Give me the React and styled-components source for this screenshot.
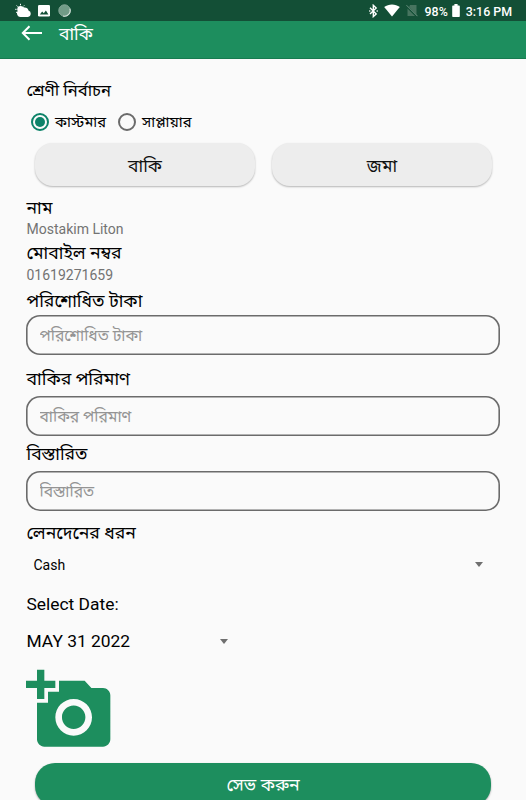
import { useState } from 'react';
import styled, { createGlobalStyle } from 'styled-components';

export default function App() {

    const [type, setType] = useState("customer");

    return (
        <>
            <GlobalStyle />
            <Screen>
                <StatusBar />
                <Header>
                    <svg width="22" height="16" viewBox="0 0 22 16" fill="none" stroke="#fff" strokeWidth="2">
                        <path d="M21 8H2M8.5 1.2L1.8 8l6.7 6.8" />
                    </svg>
                    <h1>বাকি</h1>
                </Header>
                <Content>
                    <Label $height={26} $size={16.6}>শ্রেণী নির্বাচন</Label>
                    <Radios>
                        <RadioOption onClick={() => setType("customer")}>
                            <Circle $checked={type === "customer"} />
                            <span>কাস্টমার</span>
                        </RadioOption>
                        <RadioOption onClick={() => setType("supplier")}>
                            <Circle $checked={type === "supplier"} />
                            <span>সাপ্লায়ার</span>
                        </RadioOption>
                    </Radios>
                    <Buttons>
                        <GrayButton>বাকি</GrayButton>
                        <GrayButton>জমা</GrayButton>
                    </Buttons>
                    <Label $height={22} $top={11}>নাম</Label>
                    <Value>Mostakim Liton</Value>
                    <Label $height={24} $top={2} $size={17.6}>মোবাইল নম্বর</Label>
                    <Value>01619271659</Value>
                    <Label $height={26} $top={3} $size={17.7}>পরিশোধিত টাকা</Label>
                    <Input $top={1} placeholder="পরিশোধিত টাকা" />
                    <Label $height={26} $top={11} $size={17.7}>বাকির পরিমাণ</Label>
                    <Input $top={4} placeholder="বাকির পরিমাণ" />
                    <Label $height={26} $top={5}>বিস্তারিত</Label>
                    <Input $top={4} placeholder="বিস্তারিত" />
                    <Label $height={24} $top={10} $size={17.6}>লেনদেনের ধরন</Label>
                    <Select>
                        <span>Cash</span>
                        <Arrow />
                    </Select>
                    <DateTitle>Select Date:</DateTitle>
                    <DatePicker>
                        <span>MAY 31 2022</span>
                        <Arrow />
                    </DatePicker>
                    <Photo viewBox="0 0 24 24">
                        <path d="M3 4V1h2v3h3v2H5v3H3V6H0V4h3zm3 6V7h3V4h7l1.83 2H21c1.1 0 2 .9 2 2v12c0 1.1-.9 2-2 2H5c-1.1 0-2-.9-2-2V10h3zm7 9c2.76 0 5-2.24 5-5s-2.24-5-5-5-5 2.24-5 5 2.24 5 5 5zm-3.2-5c0 1.77 1.43 3.2 3.2 3.2s3.2-1.43 3.2-3.2-1.43-3.2-3.2-3.2-3.2 1.43-3.2 3.2z" />
                    </Photo>
                    <SaveButton>সেভ করুন</SaveButton>
                </Content>
            </Screen>
        </>
    )
}

function StatusBar() {
    return (
        <Status>
            <div className='left'>
                <svg width="17" height="16" viewBox="0 0 17 16" fill="#fff">
                    <circle cx="5.5" cy="6.3" r="3.2" />
                    <path d="M5.5 14a3.7 3.7 0 0 1-1.5-7A4 4 0 0 1 9.5 4.4a4 4 0 0 1 4 3.2A3.3 3.3 0 0 1 13 14z" />
                    <path d="M5.5 2.3V.8M2.7 3.6L1.6 2.5M1.6 6.3H.2M8.3 3.4l1-1M2 9l-1 .6" stroke="#fff" strokeWidth="1" />
                </svg>
                <svg width="12" height="12" viewBox="0 0 12 12">
                    <rect width="12" height="11.5" rx="1.3" fill="#fff" />
                    <path d="M1.8 9.5l2.4-3 1.6 1.8L7.9 5.6l2.5 3.9z" fill="#134f36" />
                </svg>
                <svg width="13" height="13" viewBox="0 0 13 13">
                    <circle cx="6.5" cy="6.5" r="5.7" fill="#719b87" stroke="#88a999" />
                    <path d="M11.8 4.6A5.6 5.6 0 0 1 5 12" fill="none" stroke="#d5e2db" strokeWidth="1.1" />
                </svg>
            </div>
            <div className='right'>
                <svg width="9" height="14" viewBox="0 0 9 14" fill="none" stroke="#fff" strokeWidth="1.4">
                    <path d="M1 3.8l6.2 6.1-2.9 2.7V1.3l2.9 2.8L1 10.1" />
                    <path d="M.2 7h1.2M7.6 7h1.2" />
                </svg>
                <svg width="16" height="13" viewBox="0 0 16 13" fill="#fff">
                    <path d="M8 12.6L.2 3.1C4.6-.5 11.4-.5 15.8 3.1z" />
                </svg>
                <svg width="12" height="13" viewBox="0 0 12 13">
                    <path d="M4 1h6.500v10L3.200 3zM1.500 4.500L9 12H1.500z" fill="#47745f" />
                    <path d="M.5 1.2l11 11" stroke="#6c9280" strokeWidth="1" />
                </svg>
                <span className='percent'>98%</span>
                <svg width="8" height="13" viewBox="0 0 8 13" fill="#fff">
                    <path d="M2.4 0h3.2v1.4h1.2c.6 0 1 .4 1 1V12c0 .6-.4 1-1 1H1.200c-.6 0-1-.4-1-1V2.400c0-.6.4-1 1-1h1.200z" />
                </svg>
                <span className='time'>3:16 PM</span>
            </div>
        </Status>
    )
}

const GlobalStyle = createGlobalStyle`
    *{
        box-sizing: border-box;
    }
    body{
        margin: 0;
        overflow: hidden;
        background: #fafafa;
        font-family: Roboto, "Noto Sans Bengali", "Noto Sans", sans-serif;
        color: #000;
    }
    button, input{
        font-family: inherit;
    }
`;
const Screen = styled.main`
    width: 100%;
    height: 800px;
    overflow: hidden;
`;
const Status = styled.div`
    height: 21px;
    padding: 0 14px 0 15px;
    display: flex;
    justify-content: space-between;
    background: #134f36;
    color: #fff;
    font-size: 12.4px;
    font-weight: 500;

    .left, .right{
        display: flex;
        align-items: center;
    }
    .left{
        gap: 6px;
    }
    .left svg:last-child{
        margin-left: 2px;
    }
    .right svg{
        margin-right: 6px;
    }
    .percent{
        margin: 1px 4px 0 1px;
    }
    .time{
        margin-top: 1px;
    }
`;
const Header = styled.header`
    height: 38px;
    padding: 0 21px;
    display: flex;
    align-items: flex-start;
    gap: 16px;
    background: #1d8e5e;
    border-bottom: 1px solid #177b50;
    color: #fff;

    svg{
        margin-top: 4px;
    }
    h1{
        margin: 0;
        height: 26px;
        line-height: 26px;
        font-size: 17.5px;
        font-weight: 400;
    }
`;
const Content = styled.div`
    padding: 19px 26px 0;
    display: flex;
    flex-direction: column;
`;
const Label = styled.div`
    flex-shrink: 0;
    height: ${props => props.$height}px;
    line-height: ${props => props.$height}px;
    margin-top: ${props => props.$top || 0}px;
    padding-left: 0.5px;
    font-size: ${props => props.$size || 17.5}px;
    white-space: nowrap;
`;
const Value = styled.div`
    height: 20px;
    line-height: 20px;
    padding-left: 0.5px;
    font-size: 14px;
    color: #737373;
`;
const Radios = styled.div`
    height: 36px;
    padding-left: 5px;
    display: flex;
    align-items: center;
    gap: 12px;
`;
const RadioOption = styled.div`
    display: flex;
    align-items: center;
    gap: 6px;
    font-size: 14.8px;
    line-height: 20px;
`;
const Circle = styled.i`
    width: 18px;
    height: 18px;
    display: flex;
    align-items: center;
    justify-content: center;
    border: 2px solid ${props => props.$checked ? '#0c8268' : '#6b6b6b'};
    border-radius: 50%;

    &::after{
        content: '';
        width: 10px;
        height: 10px;
        border-radius: 50%;
        background: ${props => props.$checked ? '#0c8268' : 'transparent'};
    }
`;
const Buttons = styled.div`
    margin-top: 3px;
    padding: 0 8px 0 9px;
    display: flex;
    gap: 17px;
`;
const GrayButton = styled.button`
    flex: 1;
    height: 43px;
    padding: 5px 0 0;
    border: none;
    border-radius: 18px;
    background: #ededed;
    box-shadow: 0 1px 2px rgba(0, 0, 0, 0.28);
    font-size: 17.5px;
    color: #111;
`;
const Input = styled.input`
    width: 100%;
    height: 40px;
    margin-top: ${props => props.$top}px;
    padding: 2px 13.5px 1px;
    border: none;
    border-radius: 14px;
    background: #fafafa;
    box-shadow: inset 0 0 0 1.6px #6b6b6b;
    font-size: 15.7px;
    outline: none;

    &::placeholder{
        color: #949494;
        opacity: 1;
    }
`;
const Arrow = styled.i`
    border: 4.5px solid transparent;
    border-top: 5px solid #6f6f6f;
    border-bottom: none;
`;
const Select = styled.div`
    height: 39px;
    padding: 0 17px 0 7.5px;
    display: flex;
    align-items: center;
    justify-content: space-between;
    font-size: 14px;
`;
const DateTitle = styled.div`
    height: 40px;
    line-height: 40px;
    padding-left: 0.5px;
    font-size: 17.4px;
`;
const DatePicker = styled.div`
    width: 202px;
    height: 34px;
    padding-left: 0.5px;
    display: flex;
    align-items: center;
    justify-content: space-between;
    font-size: 17.4px;
`;
const Photo = styled.svg`
    width: 88px;
    height: 88px;
    margin-top: 8px;
    fill: #1d8e5e;
`;
const SaveButton = styled.button`
    flex-shrink: 0;
    height: 43px;
    margin: 9px 9px 0 9px;
    padding: 3px 0 0;
    border: none;
    border-radius: 20px;
    background: #1d8e5e;
    box-shadow: 0 1px 2px rgba(0, 0, 0, 0.35);
    font-size: 17.7px;
    color: #fff;
`;
